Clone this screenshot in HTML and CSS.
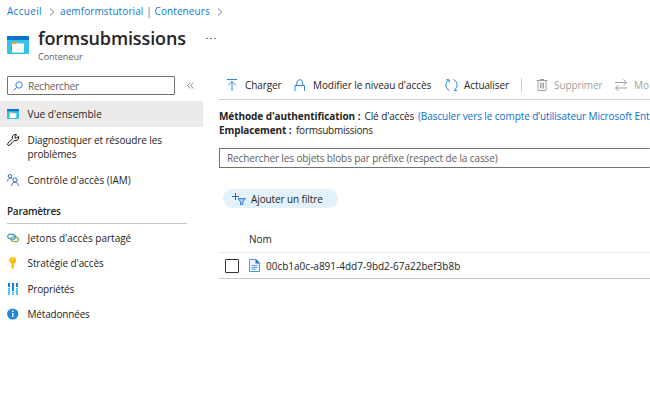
FILE: index.html
```
<!DOCTYPE html>
<html lang="fr">
<head>
<meta charset="utf-8">
<title>formsubmissions</title>
<link rel="stylesheet" href="styles.css">
</head>
<body>
<svg class="defs" width="0" height="0">
  <defs>
    <symbol id="container" viewBox="0 0 22 18">
      <rect width="22" height="18" rx="1" fill="#35c4e8"/>
      <path d="M0 4V1a1 1 0 0 1 1-1h20a1 1 0 0 1 1 1v3z" fill="#0873cf"/>
      <path d="M5 6h5.500v1.500H17v9H5z" fill="#fff"/>
      <path d="M5 6h5.500v1l-1 1H5z" fill="#f5a04b"/>
    </symbol>
  </defs>
</svg>
<header class="header">
  <nav class="crumbs">
    <a class="crumb-home">Accueil</a>
    <svg class="chev" viewBox="0 0 6 8"><path d="M1 .5 4.700 4 1 7.500"/></svg>
    <a class="crumb-account">aemformstutorial | Conteneurs</a>
    <svg class="chev" viewBox="0 0 6 8"><path d="M1 .5 4.700 4 1 7.500"/></svg>
  </nav>
  <div class="heading">
    <svg class="logo"><use href="#container"/></svg>
    <div>
      <div class="title-row"><h1>formsubmissions</h1><span class="more"><i></i><i></i><i></i></span></div>
      <p class="subtitle">Conteneur</p>
    </div>
  </div>
</header>
<div class="layout">
  <aside class="side">
    <div class="search-row">
      <div class="search">
        <svg class="glass" viewBox="0 0 10 10"><circle cx="6" cy="4" r="3.200"/><path d="M3.700 6.300.5 9.500"/></svg>
        <span class="t-search">Rechercher</span>
      </div>
      <svg class="collapse" viewBox="0 0 7 7"><path d="M3.300.5.7 3.500l2.600 3M6.300.5 3.700 3.500l2.600 3"/></svg>
    </div>
    <a class="item active"><svg class="ico-small"><use href="#container"/></svg><span>Vue d'ensemble</span></a>
    <a class="item two-line">
      <svg class="ico wrench" viewBox="0 0 12 12"><path d="M9.700.8A3.100 3.100 0 0 0 5.500 4.800L.9 9.300a1.200 1.200 0 0 0 1.800 1.800L7.200 6.500A3.100 3.100 0 0 0 11.300 2.300L9.500 4.100 8 4 7.900 2.500z"/></svg>
      <span class="t-diag">Diagnostiquer et résoudre les<br>problèmes</span>
    </a>
    <a class="item iam">
      <svg class="ico" viewBox="0 0 12 12" fill="none" stroke="#2b6bd3"><circle cx="3" cy="2.200" r="1.700"/><path d="M.5 7.500C.5 3.800 4.200 3.700 5.200 5"/><circle cx="8" cy="6" r="2.100"/><path d="M4.600 12C4.600 7 11.400 7 11.400 12"/></svg>
      <span>Contrôle d'accès (IAM)</span>
    </a>
    <h2>Paramètres</h2>
    <a class="item">
      <svg class="ico" viewBox="0 0 12 12" fill="none" stroke-width="1.200"><rect x=".7" y="2.300" width="7.600" height="4.600" rx="2.300" stroke="#2e8fd0" transform="rotate(8 4 5)"/><rect x="4" y="5" width="7.400" height="4.600" rx="2.300" stroke="#6cae2d" transform="rotate(8 8 7)"/></svg>
      <span>Jetons d'accès partagé</span>
    </a>
    <a class="item">
      <svg class="ico" viewBox="0 0 12 12"><path d="M3.700.3h4L9.400 2.700 8.600 5.500 6.900 6.700v4.100l-1.100 1.100-1.200-1.100V6.700L2.900 5.500 2.100 2.700z" fill="#ffbd0b"/><circle cx="5.700" cy="2" r=".8" fill="#fff0a0"/></svg>
      <span class="t-str">Stratégie d'accès</span>
    </a>
    <a class="item">
      <svg class="ico" viewBox="0 0 12 12"><path d="M1 0h2v4H1zM5 0h2v8H5zM9 0h2v4H9z" fill="#1683d8"/><path d="M1 5h2v7H1zM5 9h2v3H5zM9 5h2v7H9z" fill="#4fc9ee"/></svg>
      <span class="t-short">Propriétés</span>
    </a>
    <a class="item">
      <svg class="ico" viewBox="0 0 12 12"><circle cx="5.700" cy="6" r="5.600" fill="#2187db"/><path d="M5 5h1.500v4H5zM5 2.600h1.500V4H5z" fill="#fff"/></svg>
      <span class="t-short">Métadonnées</span>
    </a>
  </aside>
  <main class="main">
    <div class="toolbar">
      <a class="tool b-up"><svg viewBox="0 0 12 12"><path d="M1 .5h10M6 12V2.500M2.200 6.300 6 2.500 9.800 6.300"/></svg><span>Charger</span></a>
      <a class="tool b-lock"><svg viewBox="0 0 12 12"><path d="M1 12V6.500h9.500V12M2.500 6.500 3 3a2.800 2.800 0 0 1 5.500 0L9 6.500"/></svg><span>Modifier le niveau d'accès</span></a>
      <a class="tool b-ref"><svg viewBox="0 0 13 12"><path d="M4.500 11.500A5.900 5.900 0 0 1 3.700 1M1 .8h3.200V3.500M8.500.5A5.900 5.900 0 0 1 9.300 11M12 11.500H9"/></svg><span>Actualiser</span></a>
      <i class="sep"></i>
      <a class="tool off b-del"><svg viewBox="0 0 12 12"><path d="M.5 1.500h11M4 1.500V.5h4v1M2 1.500v10h8v-10M4.500 3.500v6M6 3.500v6M7.500 3.500v6"/></svg><span>Supprimer</span></a>
      <a class="tool off b-mod"><svg viewBox="0 0 12 12"><path d="M0 3.500h11.300M8.500.5l3 3-3 3M12 9H.7M3.500 6l-3 3 3 3"/></svg><span>Mo</span></a>
    </div>
    <div class="info">
      <p><b class="t-auth">Méthode d'authentification :</b><span class="t-key">Clé d'accès</span><a class="t-link">(Basculer vers le compte d’utilisateur Microsoft Ent</a></p>
      <p><b class="t-emp">Emplacement :</b><span class="t-form">formsubmissions</span></p>
    </div>
    <div class="blob-search"><span>Rechercher les objets blobs par préfixe (respect de la casse)</span></div>
    <a class="pill">
      <svg viewBox="0 0 14 12" fill="none"><path d="M3.500 0v7M0 3.500h7" stroke="#2565b5"/><path d="M6 5.700h7.300L10.800 8.700v3H8.500v-3z" stroke="#2e7bd6" fill="#a9ceff"/></svg>
      <span>Ajouter un filtre</span>
    </a>
    <div class="thead"><span>Nom</span></div>
    <div class="row">
      <i class="check"></i>
      <svg class="file" viewBox="0 0 11 13"><path d="M.5.500h6.700l3.300 3.300v8.700H.5z" fill="#edf6ff" stroke="#4a9ce0"/><path d="M6.500 0 11 4.500H6.500z" fill="#1b70c4"/><path d="M2.500 6.500h6M2.500 8.500h6M2.500 10.200h4" stroke="#5e9ee2"/></svg>
      <span>00cb1a0c-a891-4dd7-9bd2-67a22bef3b8b</span>
    </div>
  </main>
</div>
</body>
</html>
```
FILE: styles.css
```
* { box-sizing: border-box; }
html, body { margin: 0; height: 404px; overflow: hidden; }
body { background: #fff; color: #252423; font: 10px/14px "Open Sans", "Noto Sans", sans-serif; white-space: nowrap; }
.defs { display: block; }
h1, h2, p { margin: 0; }
svg { flex: none; }
.header { height: 76px; }
.crumbs { display: flex; align-items: center; height: 22px; padding-left: 7px; color: #0f78d4; }
.crumb-home { width: 35px; letter-spacing: .3px; }
.crumb-account { width: 150px; letter-spacing: .1px; }
.chev { width: 6px; height: 8px; fill: none; stroke: #605e5c; stroke-width: .8; }
.crumbs .chev { margin: 1px 5px 0 7px; }
.heading { display: flex; padding: 4px 0 0 7px; }
.logo { width: 22px; height: 18px; margin: 10px 9px 0 0; }
.title-row { display: flex; align-items: center; height: 24px; }
h1 { font-size: 18px; line-height: 24px; font-weight: 600; width: 148px; letter-spacing: -.13px; }
.more { display: flex; gap: 2px; margin-left: 20px; }
.more i { width: 2px; height: 1px; background: #807e7c; }
.subtitle { font-size: 9px; color: #605e5c; }
.layout { display: flex; }
.side { width: 203px; flex: none; }
.search-row { display: flex; align-items: center; padding-left: 7px; }
.search { display: flex; align-items: center; width: 168px; height: 19px; padding-left: 5px; border: 1px solid #737170; border-radius: 1px; color: #605e5c; }
.t-search { letter-spacing: -.22px; }
.glass { width: 10px; height: 10px; margin-right: 5px; fill: none; stroke: #2b88d8; }
.collapse { width: 7px; height: 7px; margin-left: 12px; fill: none; stroke: #777; stroke-width: .8; }
.item { display: flex; align-items: center; height: 25.500px; padding-left: 7px; }
.item.active { height: 26px; margin-top: 6px; background: #edebe9; }
.ico { width: 12px; height: 12px; margin-right: 8.500px; }
.ico-small { width: 12px; height: 10px; margin-right: 8.500px; }
.wrench { margin-top: 1px; fill: none; stroke: #111; }
.item.two-line { height: 40px; align-items: flex-start; padding-top: 6px; }
.item.iam { height: 25px; }
.t-diag { letter-spacing: -.13px; }
.t-str { letter-spacing: -.1px; }
.t-short { letter-spacing: -.18px; }
h2 { width: 180px; height: 32px; margin: 0 0 1px 7px; padding-top: 12px; border-bottom: 1px solid #c8c6c4; font-size: 10px; line-height: 14px; font-weight: 600; letter-spacing: -.28px; }
.main { margin-left: 16px; width: 431px; flex: none; }
.toolbar { display: flex; align-items: center; height: 24px; padding-bottom: 5px; border-bottom: 1px solid #d2d0ce; padding-left: 7px; }
.tool { display: flex; align-items: center; flex: none; }
.tool svg { width: 12px; height: 12px; margin-right: 7px; fill: none; stroke: #2b88d8; }
.off { color: #a19f9d; }
.tool.off svg { stroke: #a19f9d; }
.b-up { width: 68px; letter-spacing: -.1px; }
.b-lock { width: 151px; letter-spacing: -.07px; }
.b-ref { width: 76px; letter-spacing: -.1px; }
.tool.b-ref svg { width: 13px; margin-right: 6px; }
.sep { width: 1px; height: 14px; background: #d2d0ce; margin-right: 14px; }
.b-del { width: 79px; letter-spacing: -.1px; }
.tool.b-del svg { margin-right: 6px; }
.info { padding: 9px 0 0; height: 48px; }
.info p { height: 14px; display: flex; }
.info b { font-weight: 700; }
.t-auth { width: 145.500px; letter-spacing: -.07px; }
.t-key { width: 53.500px; letter-spacing: -.1px; }
.t-link { color: #0f6cce; letter-spacing: -.08px; }
.t-emp { width: 77px; letter-spacing: -.12px; }
.t-form { letter-spacing: -.25px; }
.blob-search { height: 20px; border: 1px solid #737170; border-radius: 1px; border-right: 0; padding: 2px 7px; color: #605e5c; letter-spacing: -.115px; }
.pill { display: flex; align-items: center; width: 115px; height: 19px; margin: 21px 0 0 4px; padding-left: 9px; border-radius: 10px; background: #e3f1fc; letter-spacing: -.1px; }
.pill svg { width: 14px; height: 12px; margin-right: 5px; }
.thead { height: 45px; padding: 24px 0 0 30px; border-bottom: 1px solid #edebe9; }
.row { display: flex; align-items: center; height: 26px; padding-left: 6px; border-bottom: 1px solid #c8c6c4; }
.check { width: 14px; height: 14px; border: 1px solid #323130; border-radius: 1px; }
.file { width: 11px; height: 13px; margin: 0 6px 0 10px; }
```
